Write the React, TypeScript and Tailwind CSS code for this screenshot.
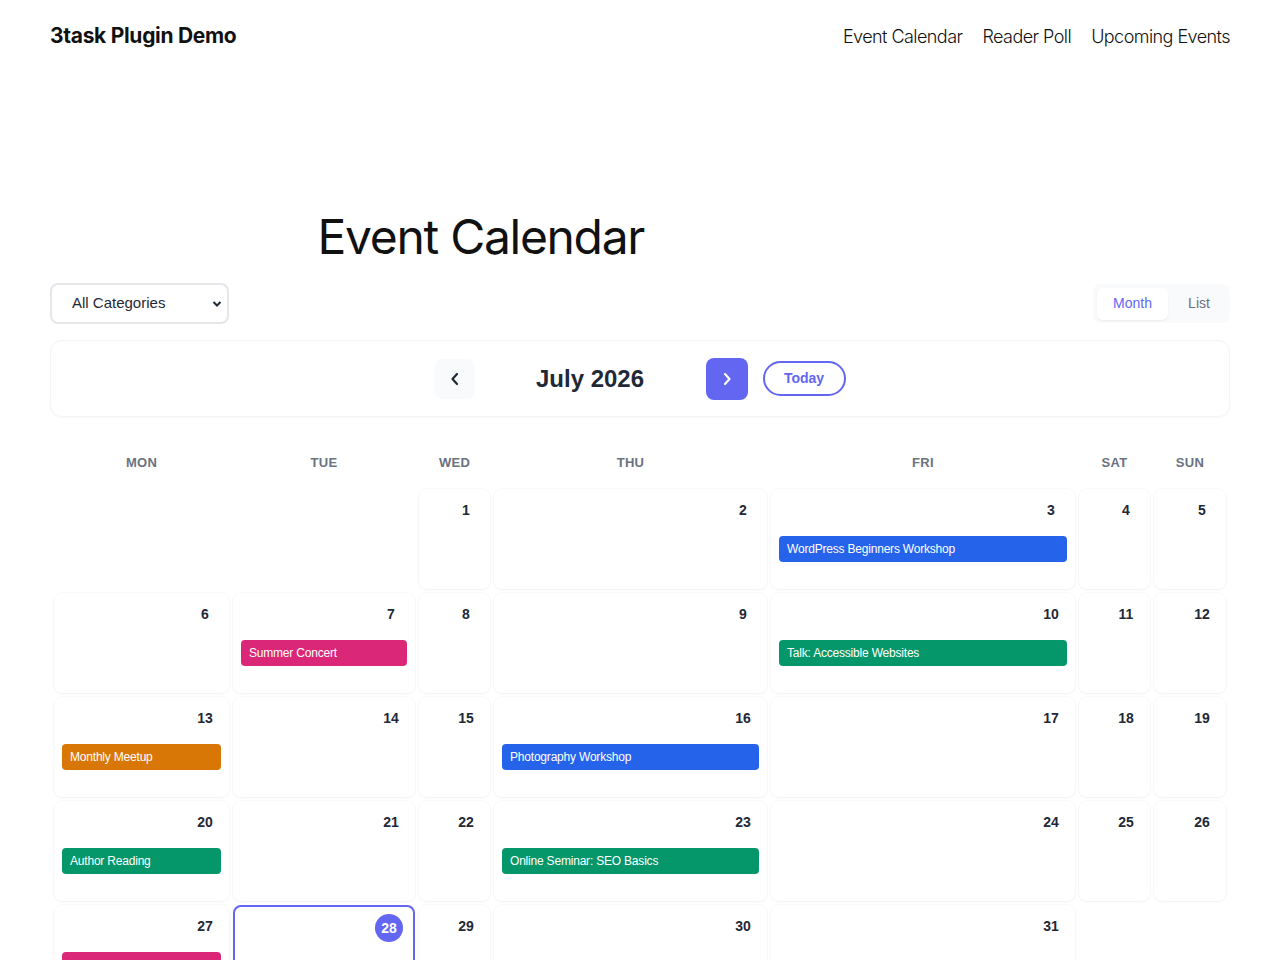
import React from "react";

type Ev = { title: string; color: string };
type Cell = { day?: number; events?: Ev[]; today?: boolean };

const PINK = "bg-[#db2777]";
const BLUE = "bg-[#2563eb]";
const GREEN = "bg-[#059669]";
const ORANGE = "bg-[#d97706]";

const weeks: Cell[][] = [
  [{}, {}, { day: 1 }, { day: 2 }, { day: 3, events: [{ title: "WordPress Beginners Workshop", color: BLUE }] }, { day: 4 }, { day: 5 }],
  [{ day: 6 }, { day: 7, events: [{ title: "Summer Concert", color: PINK }] }, { day: 8 }, { day: 9 }, { day: 10, events: [{ title: "Talk: Accessible Websites", color: GREEN }] }, { day: 11 }, { day: 12 }],
  [{ day: 13, events: [{ title: "Monthly Meetup", color: ORANGE }] }, { day: 14 }, { day: 15 }, { day: 16, events: [{ title: "Photography Workshop", color: BLUE }] }, { day: 17 }, { day: 18 }, { day: 19 }],
  [{ day: 20, events: [{ title: "Author Reading", color: GREEN }] }, { day: 21 }, { day: 22 }, { day: 23, events: [{ title: "Online Seminar: SEO Basics", color: GREEN }] }, { day: 24 }, { day: 25 }, { day: 26 }],
  [{ day: 27, events: [{ title: "Summer Concert", color: PINK }] }, { day: 28, today: true }, { day: 29 }, { day: 30 }, { day: 31 }, {}, {}],
];

const days = ["MON", "TUE", "WED", "THU", "FRI", "SAT", "SUN"];

export default function App() {
  return (
    <div className="min-h-[960px] bg-white text-[#111] overflow-hidden" style={{ fontFamily: "Inter, 'Noto Sans', sans-serif" }}>
      <header className="flex items-center justify-between px-[50px] h-[72px]">
        <div className="text-[21px] font-bold tracking-[-0.3px] text-[#111]">3task Plugin Demo</div>
        <nav className="flex gap-[20px] text-[18px] font-light tracking-[-0.55px] text-[#111]">
          <a>Event Calendar</a>
          <a>Reader Poll</a>
          <a>Upcoming Events</a>
        </nav>
      </header>

      <main className="px-[50px]">
        <div className="mx-auto w-[645px] mt-[141px]">
          <h1 className="text-[48px] leading-[1] tracking-[-1.3px] font-normal text-[#111]">Event Calendar</h1>
        </div>

        <div style={{ fontFamily: "'Liberation Sans', Arial, sans-serif" }}>
          <div className="flex items-center justify-between mt-[22px]">
            <div className="relative w-[179px] h-[41px] border-2 border-[#e5e7eb] rounded-[8px] flex items-center pl-[20px] text-[15px] text-[#1f2937]">
              All Categories
              <svg className="absolute right-[5px] top-[15px]" width="10" height="8" viewBox="0 0 10 8">
                <path d="M1.5 2 L5 5.5 L8.5 2" stroke="#1f2937" strokeWidth="2" fill="none" />
              </svg>
            </div>
            <div className="flex items-center w-[137px] h-[39px] bg-[#f8fafc] rounded-[8px] p-[4px]">
              <div className="w-[71px] h-[32px] bg-white rounded-[6px] shadow-[0_1px_2px_rgba(0,0,0,0.06)] flex items-center justify-center text-[14px] text-[#6366f1]">Month</div>
              <div className="flex-1 flex items-center justify-center pl-[4px] text-[14px] text-[#6b7280]">List</div>
            </div>
          </div>

          <div className="mt-[16px] h-[77px] rounded-[12px] border border-[#f3f4f6] shadow-[0_1px_2px_rgba(0,0,0,0.03)] flex items-center justify-center gap-[15px]">
            <button className="w-[40px] h-[40px] rounded-[8px] bg-[#f8fafc] flex items-center justify-center">
              <svg width="12" height="14" viewBox="0 0 12 14"><path d="M8 2 L3.5 7 L8 12" stroke="#1f2937" strokeWidth="2.2" fill="none" strokeLinecap="round" strokeLinejoin="round" /></svg>
            </button>
            <div className="w-[201px] text-center text-[24px] font-bold text-[#1f2937]">July 2026</div>
            <button className="w-[42px] h-[42px] rounded-[8px] bg-[#6366f1] flex items-center justify-center">
              <svg width="12" height="14" viewBox="0 0 12 14"><path d="M4 2 L8.5 7 L4 12" stroke="#fff" strokeWidth="2.2" fill="none" strokeLinecap="round" strokeLinejoin="round" /></svg>
            </button>
            <button className="w-[83px] h-[35px] rounded-full border-2 border-[#6366f1] text-[#6366f1] text-[14px] font-bold">Today</button>
          </div>

          <div className="mt-[23px] px-[4px] grid grid-cols-[175px_182px_71px_273px_304px_71px_72px] gap-x-[4px] gap-y-[4px]">
            {days.map((d) => (
              <div key={d} className="h-[45px] flex items-center justify-center text-[13px] font-bold text-[#6b7280] tracking-[0.3px]">{d}</div>
            ))}
            {weeks.flat().map((c, i) =>
              c.day ? (
                <div
                  key={i}
                  className={
                    "h-[100px] rounded-[8px] bg-white " +
                    (c.today
                      ? "border-2 border-[#6366f1] pt-[7px] pr-[10px] pl-[8px] pb-[8px]"
                      : "pt-[7px] pr-[10px] pl-[8px] pb-[8px] shadow-[0_0_0_1px_rgba(0,0,0,0.02),0_1px_3px_rgba(0,0,0,0.04)]")
                  }
                >
                  <div className="flex justify-end">
                    <div
                      className={
                        "w-[28px] h-[28px] rounded-full flex items-center justify-center text-[14px] font-bold " +
                        (c.today ? "bg-[#6366f1] text-white" : "text-[#1f2937]")
                      }
                    >
                      {c.day}
                    </div>
                  </div>
                  {c.events?.map((e, j) => (
                    <div key={j} className={"mt-[12px] -mr-[2px] h-[26px] rounded-[4px] text-white text-[12px] flex items-center px-[8px] tracking-[-0.2px] whitespace-nowrap overflow-hidden " + e.color}>
                      {e.title}
                    </div>
                  ))}
                </div>
              ) : (
                <div key={i} className="h-[100px]" />
              )
            )}
          </div>
        </div>
      </main>
    </div>
  );
}
